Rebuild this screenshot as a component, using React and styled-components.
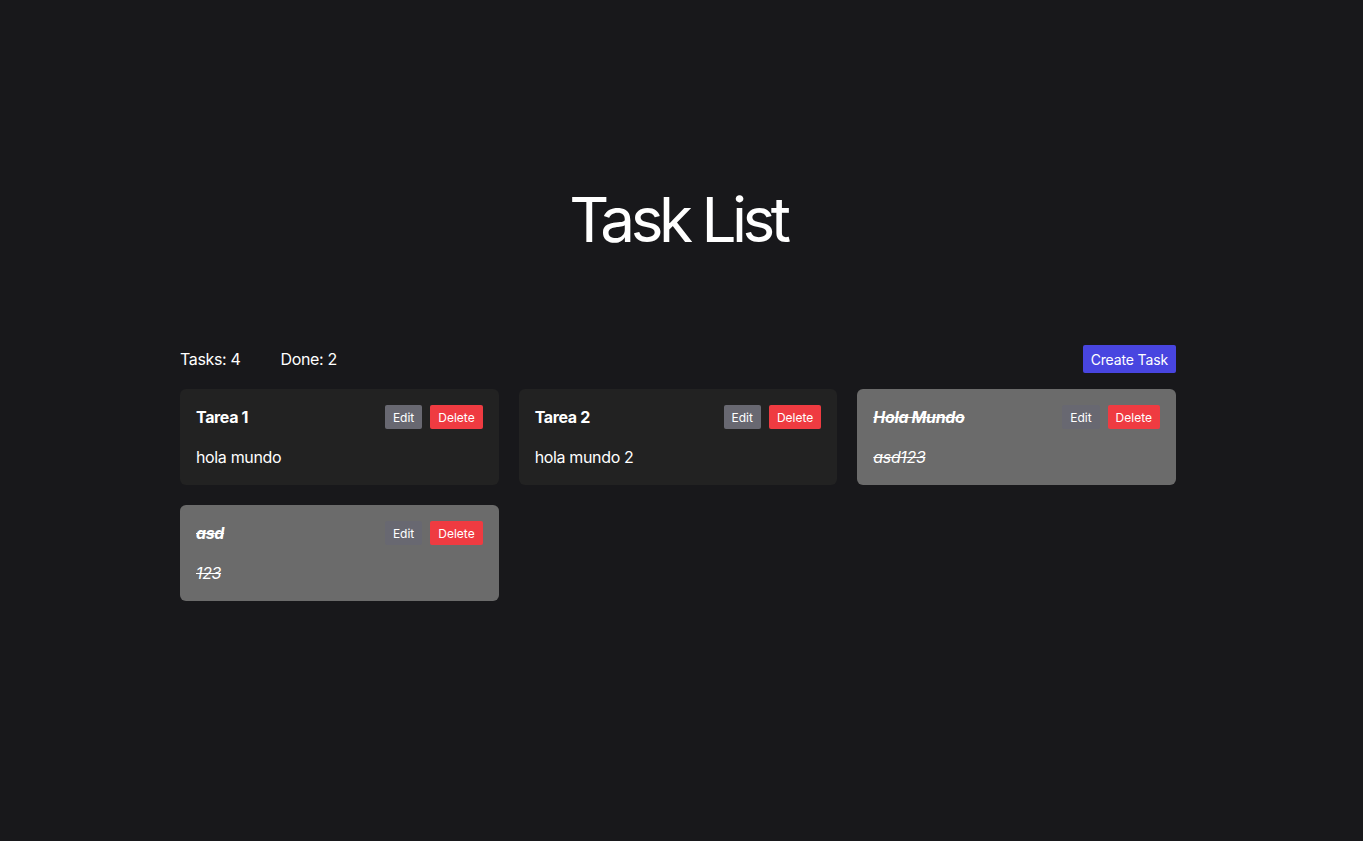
import styled, { createGlobalStyle } from 'styled-components'

const GlobalStyle = createGlobalStyle`
  body {
    margin: 0;
    background: #18181b;
    color: #ffffff;
    font-family: Inter, "Noto Sans", sans-serif;
    letter-spacing: -0.022em;
  }
`

const Page = styled.main`
  width: 996px;
  margin: 0 0 0 180px;
  padding-top: 184px;
`

const Title = styled.h1`
  margin: 0 0 89px;
  font-size: 62px;
  line-height: 72px;
  font-weight: 400;
  letter-spacing: -0.072em;
  text-align: center;
`

const Toolbar = styled.div`
  display: flex;
  align-items: center;
  justify-content: space-between;
  height: 28px;
  margin-bottom: 16px;
`

const Stats = styled.div`
  display: flex;
  gap: 40px;
  font-size: 16px;
`

const CreateButton = styled.button`
  height: 28px;
  padding: 0 8px;
  border: none;
  border-radius: 2px;
  background: #4845e0;
  color: #ffffff;
  font-family: inherit;
  font-size: 14px;
  letter-spacing: -0.01em;
  cursor: pointer;
`

const Grid = styled.div`
  display: grid;
  grid-template-columns: repeat(3, 1fr);
  gap: 20px;
`

const Card = styled.div`
  display: flex;
  flex-direction: column;
  gap: 16px;
  padding: 16px;
  border-radius: 6px;
  background: ${props => (props.done ? '#6b6b6b' : '#222222')};
`

const CardHeader = styled.div`
  display: flex;
  align-items: center;
  justify-content: space-between;
  height: 24px;
`

const CardTitle = styled.h3`
  margin: 0;
  font-size: 16px;
  font-weight: 700;
  font-style: ${props => (props.done ? 'italic' : 'normal')};
  text-decoration: ${props => (props.done ? 'line-through' : 'none')};
`

const Actions = styled.div`
  display: flex;
  gap: 8px;
`

const SmallButton = styled.button`
  height: 24px;
  padding: 0 8px;
  border: none;
  border-radius: 2px;
  background: ${props => (props.danger ? '#ef3b41' : '#686871')};
  color: #ffffff;
  font-family: inherit;
  font-size: 12px;
  letter-spacing: 0;
  cursor: pointer;
`

const Description = styled.p`
  margin: 0;
  font-size: 16px;
  line-height: 24px;
  font-style: ${props => (props.done ? 'italic' : 'normal')};
  text-decoration: ${props => (props.done ? 'line-through' : 'none')};
`

const tasks = [
  { id: 1, title: 'Tarea 1', description: 'hola mundo', done: false },
  { id: 2, title: 'Tarea 2', description: 'hola mundo 2', done: false },
  { id: 3, title: 'Hola Mundo', description: 'asd123', done: true },
  { id: 4, title: 'asd', description: '123', done: true },
]

export default function App() {
  const doneCount = tasks.filter(t => t.done).length
  return (
    <>
      <GlobalStyle />
      <Page>
        <Title>Task List</Title>
        <Toolbar>
          <Stats>
            <span>Tasks: {tasks.length}</span>
            <span>Done: {doneCount}</span>
          </Stats>
          <CreateButton>Create Task</CreateButton>
        </Toolbar>
        <Grid>
          {tasks.map(task => (
            <Card key={task.id} done={task.done}>
              <CardHeader>
                <CardTitle done={task.done}>{task.title}</CardTitle>
                <Actions>
                  <SmallButton>Edit</SmallButton>
                  <SmallButton danger>Delete</SmallButton>
                </Actions>
              </CardHeader>
              <Description done={task.done}>{task.description}</Description>
            </Card>
          ))}
        </Grid>
      </Page>
    </>
  )
}
